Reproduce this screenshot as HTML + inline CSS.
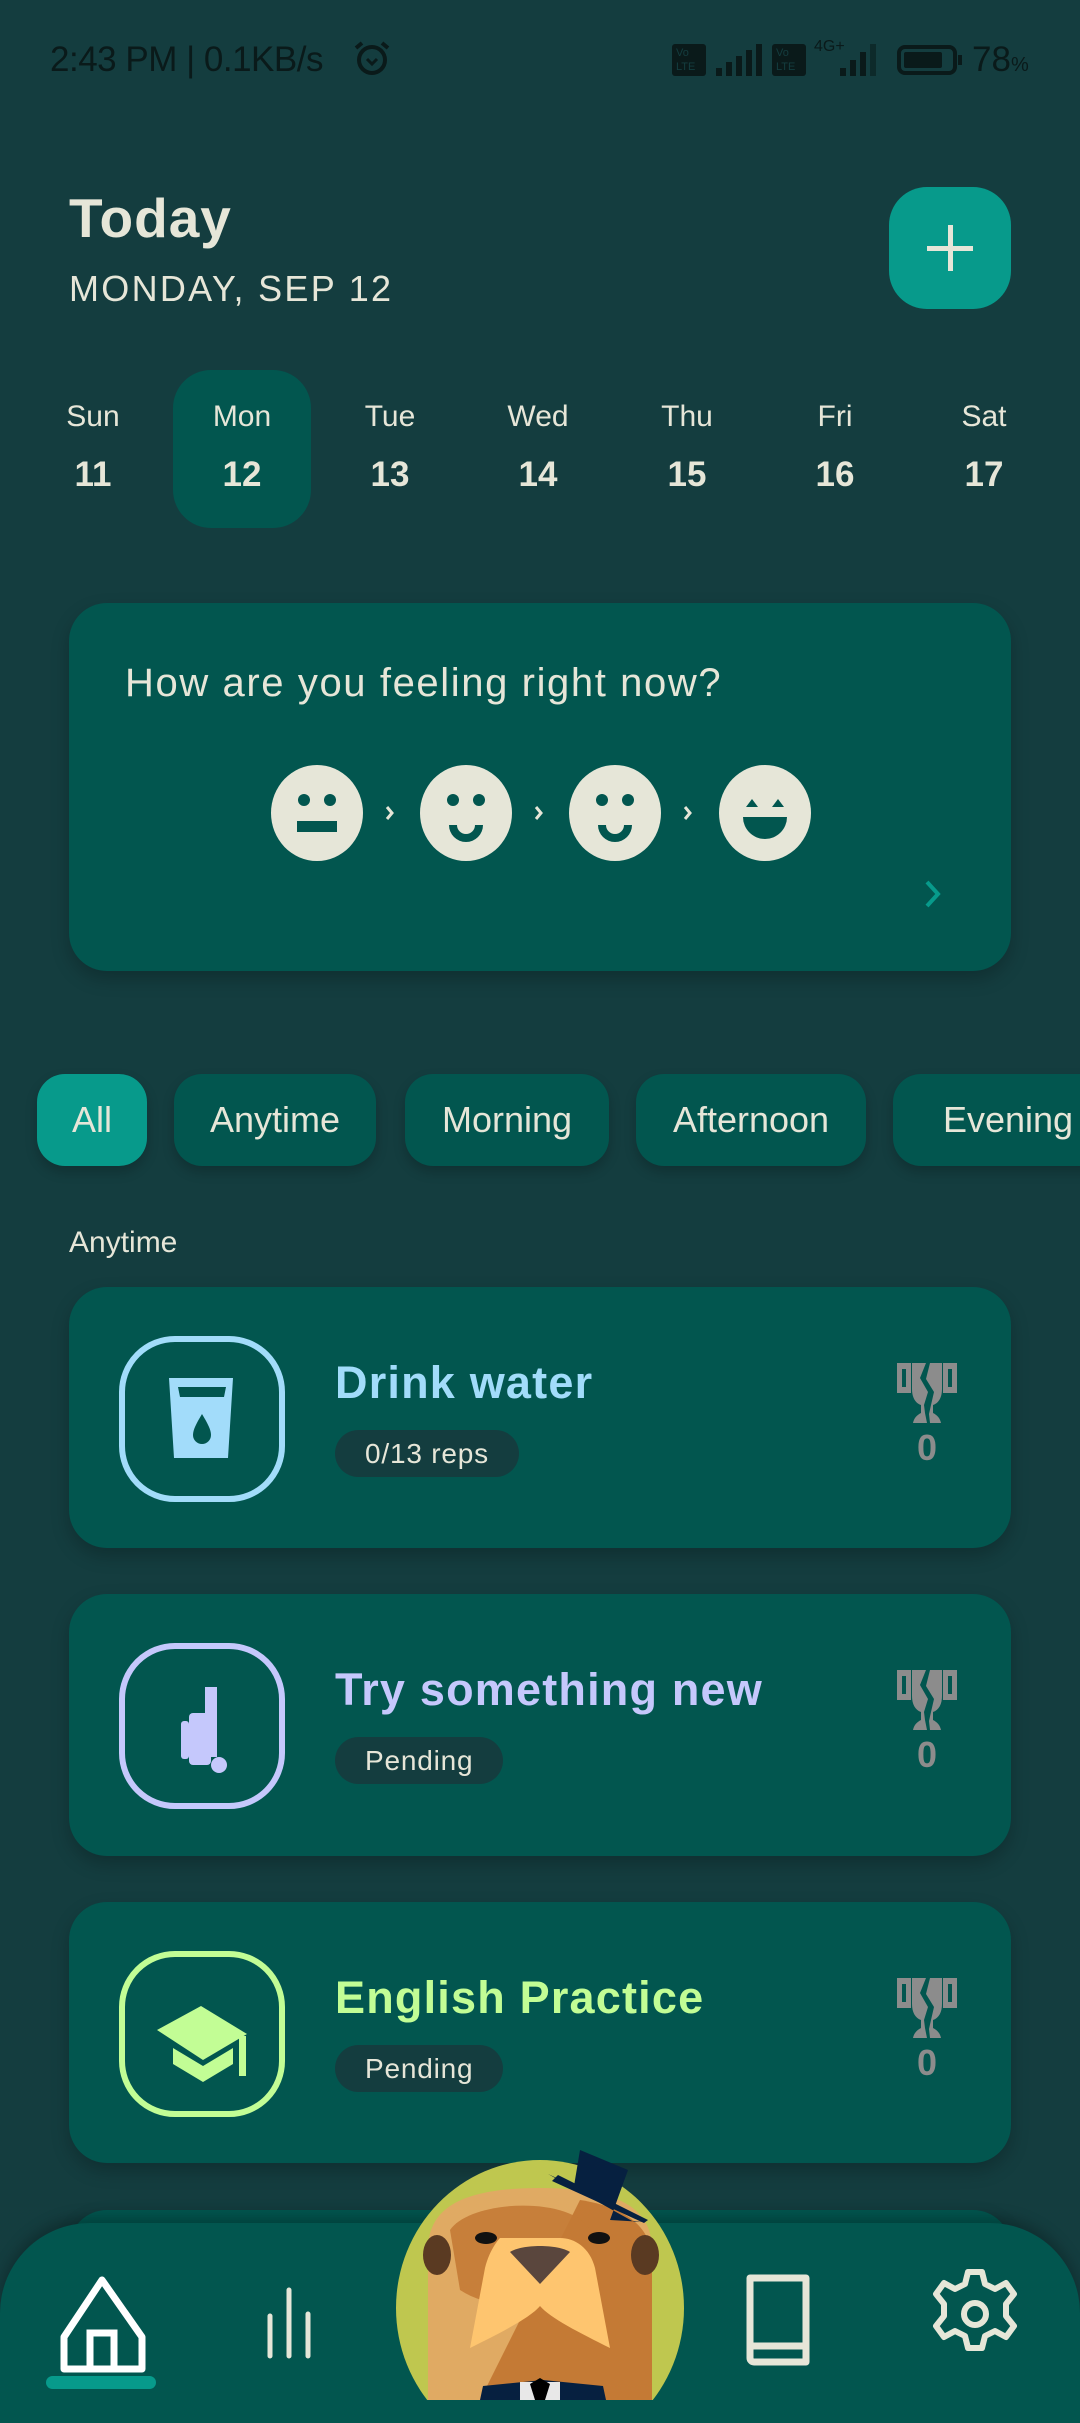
<!DOCTYPE html>
<html><head><meta charset="utf-8">
<style>
*{margin:0;padding:0;box-sizing:border-box}
html,body{width:1080px;height:2400px;overflow:hidden;background:#143d3f;font-family:"Liberation Sans",sans-serif}
.a{position:absolute}
.cream{color:#e6e6d8}
.card{position:absolute;left:69px;width:942px;background:#02564f;border-radius:38px;box-shadow:0 8px 18px rgba(0,0,0,.22)}
.chip{position:absolute;top:1074px;height:92px;border-radius:28px;background:#02564f;color:#e6e6d8;font-size:36px;line-height:92px;text-align:center;box-shadow:0 6px 12px rgba(0,0,0,.2)}
.day{position:absolute;width:120px;text-align:center;color:#e6e6d8}
.dn{top:400px;font-size:30px}
.dd{top:455px;font-size:35px;font-weight:bold}
.ibox{position:absolute;left:50px;top:49px;width:166px;height:166px;border:6px solid;border-radius:56px}
.title{position:absolute;left:266px;top:70px;font-size:45px;font-weight:bold;letter-spacing:1.2px}
.pill{position:absolute;left:266px;top:143px;height:47px;border-radius:24px;background:#143d3f;color:#e6e6d8;font-size:28px;line-height:47px;padding:0 30px;letter-spacing:0.8px}
.zero{position:absolute;left:825px;top:140px;width:66px;text-align:center;color:#8c8c8c;font-size:36px;font-weight:bold}
</style></head><body>

<!-- status bar -->
<div class="a" style="left:50px;top:40px;font-size:35px;color:#0a1a1a;letter-spacing:-0.5px">2:43 PM | 0.1KB/s</div>
<svg class="a" style="left:352px;top:40px" width="42" height="36" viewBox="0 0 42 36"><circle cx="20" cy="20" r="13" fill="none" stroke="#0a1a1a" stroke-width="4"/><path d="M4 8l6-5M36 8l-6-5" stroke="#0a1a1a" stroke-width="4"/><path d="M15 19l5 5 5-5" stroke="#0a1a1a" stroke-width="3" fill="none"/></svg>
<div class="a" style="left:672px;top:44px;width:34px;height:32px;background:#0a1a1a;border-radius:3px;color:#143d3f;font-size:11px;line-height:14px;padding:2px 4px">Vo<br>LTE</div>
<svg class="a" style="left:714px;top:44px" width="50" height="32"><rect x="2" y="24" width="6" height="8" fill="#0a1a1a"/><rect x="12" y="18" width="6" height="14" fill="#0a1a1a"/><rect x="22" y="12" width="6" height="20" fill="#0a1a1a"/><rect x="32" y="6" width="6" height="26" fill="#0a1a1a"/><rect x="42" y="0" width="6" height="32" fill="#0a1a1a"/></svg>
<div class="a" style="left:772px;top:44px;width:34px;height:32px;background:#0a1a1a;border-radius:3px;color:#143d3f;font-size:11px;line-height:14px;padding:2px 4px">Vo<br>LTE</div>
<div class="a" style="left:814px;top:38px;font-size:16px;color:#0a1a1a">4G+</div>
<svg class="a" style="left:828px;top:44px" width="56" height="32"><rect x="12" y="24" width="6" height="8" fill="#0a1a1a"/><rect x="22" y="16" width="6" height="16" fill="#0a1a1a"/><rect x="32" y="8" width="6" height="24" fill="#0a1a1a"/><rect x="42" y="0" width="6" height="32" fill="#0d2a2a"/></svg>
<div class="a" style="left:897px;top:45px;width:60px;height:30px;border:4px solid #0a1a1a;border-radius:8px"><div style="margin:3px;width:38px;height:16px;background:#0a1a1a;border-radius:2px"></div></div>
<div class="a" style="left:958px;top:55px;width:4px;height:10px;background:#0a1a1a"></div>
<div class="a" style="left:972px;top:40px;font-size:35px;color:#0a1a1a">78<span style="font-size:20px">%</span></div>

<!-- header -->
<div class="a cream" style="left:69px;top:186px;font-size:55px;font-weight:bold;letter-spacing:1px">Today</div>
<div class="a cream" style="left:69px;top:268px;font-size:36px;letter-spacing:2.3px">MONDAY, SEP 12</div>
<div class="a" style="left:889px;top:187px;width:122px;height:122px;border-radius:38px;background:#079a8b"></div>
<div class="a" style="left:927px;top:246px;width:46px;height:5px;background:#e6e6d8"></div>
<div class="a" style="left:948px;top:225px;width:5px;height:46px;background:#e6e6d8"></div>

<!-- days -->
<div class="a" style="left:173px;top:370px;width:138px;height:158px;border-radius:38px;background:#02564f"></div>
<div class="day dn" style="left:33px">Sun</div><div class="day dd" style="left:33px">11</div>
<div class="day dn" style="left:182px">Mon</div><div class="day dd" style="left:182px">12</div>
<div class="day dn" style="left:330px">Tue</div><div class="day dd" style="left:330px">13</div>
<div class="day dn" style="left:478px">Wed</div><div class="day dd" style="left:478px">14</div>
<div class="day dn" style="left:627px">Thu</div><div class="day dd" style="left:627px">15</div>
<div class="day dn" style="left:775px">Fri</div><div class="day dd" style="left:775px">16</div>
<div class="day dn" style="left:924px">Sat</div><div class="day dd" style="left:924px">17</div>

<!-- mood card -->
<div class="card" style="top:603px;height:368px">
  <div class="a cream" style="left:56px;top:58px;font-size:40px;letter-spacing:1.6px">How are you feeling right now?</div>
  <svg class="a" style="left:200px;top:160px" width="560" height="100" viewBox="0 0 560 100">
    <g fill="#e6e6d8">
      <ellipse cx="48" cy="50" rx="46" ry="48"/><ellipse cx="197" cy="50" rx="46" ry="48"/><ellipse cx="346" cy="50" rx="46" ry="48"/><ellipse cx="496" cy="50" rx="46" ry="48"/>
    </g>
    <g fill="#02564f">
      <circle cx="35" cy="37" r="6"/><circle cx="61" cy="37" r="6"/><rect x="28" y="58" width="40" height="11"/>
      <circle cx="184" cy="37" r="6"/><circle cx="210" cy="37" r="6"/><path d="M180 62a17 17 0 0 0 34 0l-8 0a9 9 0 0 1-18 0z"/>
      <circle cx="333" cy="37" r="6"/><circle cx="359" cy="37" r="6"/><path d="M329 62a17 17 0 0 0 34 0l-8 0a9 9 0 0 1-18 0z"/>
      <path d="M477 44l6-8 6 8zM503 44l6-8 6 8z"/><path d="M474 54h44a22 22 0 0 1-44 0z"/>
    </g>
    <g stroke="#e6e6d8" stroke-width="3" fill="none"><path d="M118 44l5 6-5 6M267 44l5 6-5 6M416 44l5 6-5 6"/></g>
  </svg>
  <svg class="a" style="left:854px;top:276px" width="20" height="30"><path d="M4 3l11 12-11 12" stroke="#079a8b" stroke-width="4" fill="none"/></svg>
</div>

<!-- chips -->
<div class="chip" style="left:37px;width:110px;background:#079a8b">All</div>
<div class="chip" style="left:174px;width:202px">Anytime</div>
<div class="chip" style="left:405px;width:204px">Morning</div>
<div class="chip" style="left:636px;width:230px">Afternoon</div>
<div class="chip" style="left:893px;width:230px">Evening</div>

<div class="a cream" style="left:69px;top:1226px;font-size:30px">Anytime</div>

<!-- trophy symbol -->
<svg width="0" height="0" style="position:absolute">
  <defs>
    <g id="tr" fill="#8c8c8c" fill-rule="evenodd">
      <path d="M0 0h14v30H0zM5 6v18h4V6z"/>
      <path d="M46 0h14v30H46zM51 6v18h4V6z"/>
      <path d="M15 0h14l-6 15 8 14-4 13 1 8 2 10H16c1-5 4-8 8-10v-8C18 40 15 34 15 26z"/>
      <path d="M33 0h12v26c0 8-3 14-9 16v8c4 2 7 5 8 10H33l-1-9 2-9 3-13-8-13z"/>
    </g>
  </defs>
</svg>

<!-- card 1 -->
<div class="card" style="top:1287px;height:261px">
  <div class="ibox" style="border-color:#a2dcfa">
    <svg class="a" style="left:40px;top:32px" width="74" height="90" viewBox="0 0 74 90"><path d="M4 4h64l-5 80H9z" fill="#a2dcfa"/><path d="M13 13h48l-2 10H15z" fill="#02564f"/><path d="M37 40c-6 10-9 16-9 21a9 9 0 0 0 18 0c0-5-3-11-9-21z" fill="#02564f"/></svg>
  </div>
  <div class="title" style="color:#a2dcfa">Drink water</div>
  <div class="pill">0/13 reps</div>
  <svg class="a" style="left:828px;top:76px" width="60" height="60" viewBox="0 0 60 60"><use href="#tr"/></svg>
  <div class="zero">0</div>
</div>

<!-- card 2 -->
<div class="card" style="top:1594px;height:262px">
  <div class="ibox" style="border-color:#c5c8fc">
    <svg class="a" style="left:50px;top:38px" width="60" height="90" viewBox="0 0 60 90"><g fill="#c5c8fc"><path d="M30 0h12v70H30V36h-8V26h8z"/><rect x="14" y="26" width="22" height="52" rx="4"/><rect x="6" y="34" width="8" height="38" rx="3"/><circle cx="44" cy="78" r="8"/></g></svg>
  </div>
  <div class="title" style="color:#c5c8fc">Try something new</div>
  <div class="pill">Pending</div>
  <svg class="a" style="left:828px;top:76px" width="60" height="60" viewBox="0 0 60 60"><use href="#tr"/></svg>
  <div class="zero">0</div>
</div>

<!-- card 3 -->
<div class="card" style="top:1902px;height:261px">
  <div class="ibox" style="border-color:#c2fd95">
    <svg class="a" style="left:32px;top:45px" width="92" height="84" viewBox="0 0 92 84"><g fill="#c2fd95"><path d="M0 28L44 4l46 28-44 26z"/><path d="M16 46v16l30 18 30-18V46l-30 18z"/><path d="M82 34h7v40h-7z"/></g></svg>
  </div>
  <div class="title" style="color:#c2fd95">English Practice</div>
  <div class="pill">Pending</div>
  <svg class="a" style="left:828px;top:76px" width="60" height="60" viewBox="0 0 60 60"><use href="#tr"/></svg>
  <div class="zero">0</div>
</div>

<!-- card 4 peek -->
<div class="card" style="top:2210px;height:200px"></div>

<!-- bottom nav -->
<div class="a" style="left:0;top:2223px;width:1080px;height:200px;background:#02564f;border-radius:90px 90px 0 0;box-shadow:0 -6px 14px rgba(0,0,0,.25)"></div>
<svg class="a" style="left:58px;top:2275px" width="90" height="100" viewBox="0 0 90 100"><path d="M44 5L6 62v32h78V62z" fill="none" stroke="#fff" stroke-width="7" stroke-linejoin="round"/><path d="M32 94V58h24v36" fill="none" stroke="#fff" stroke-width="7"/></svg>
<div class="a" style="left:46px;top:2376px;width:110px;height:13px;border-radius:7px;background:#079a8b"></div>
<svg class="a" style="left:260px;top:2280px" width="60" height="80"><g stroke="#e6e6d8" stroke-width="5" stroke-linecap="round"><path d="M10 36v40M29 10v66M48 34v42"/></g></svg>
<svg class="a" style="left:744px;top:2270px" width="70" height="100" viewBox="0 0 70 100"><path d="M6 80V8h56v84H10a4 4 0 0 1-4-4z" fill="none" stroke="#e6e6d8" stroke-width="7" stroke-linejoin="round"/><path d="M6 76h56" stroke="#e6e6d8" stroke-width="7"/></svg>
<svg class="a" style="left:930px;top:2264px" width="90" height="100" viewBox="-45 -50 90 100"><path d="M-7-42h14l3 12 10 5 11-6 8 11-8 10v12l8 10-8 11-11-6-10 5-3 12h-14l-3-12-10-5-11 6-8-11 8-10v-12l-8-10 8-11 11 6 10-5z" fill="none" stroke="#e6e6d8" stroke-width="6" stroke-linejoin="round"/><circle r="11" fill="none" stroke="#e6e6d8" stroke-width="6"/></svg>

<!-- mascot -->
<svg class="a" style="left:380px;top:2140px" width="320" height="260" viewBox="0 0 320 260">
  <ellipse cx="160" cy="168" rx="144" ry="148" fill="#bfc74f"/>
  <path d="M48 260V110c0-40 30-62 112-62s112 22 112 62v150z" fill="#e0aa63"/>
  <path d="M200 60c40 6 72 24 72 60v140H100z" fill="#c47a35"/>
  <path d="M70 90c20-30 120-35 140 0l-20 60c-30 20-80 20-110 0z" fill="#c47a35" opacity=".9"/>
  <ellipse cx="57" cy="115" rx="14" ry="20" fill="#5a3a22"/>
  <ellipse cx="265" cy="115" rx="14" ry="20" fill="#5a3a22"/>
  <path d="M120 98h60c15 0 30 10 35 30l15 80c-30-15-60-30-70-42-10 12-40 27-70 42l15-80c5-20 15-30 15-30z" fill="#fec56f"/>
  <path d="M130 112c12-8 48-8 60 0l-30 32z" fill="#5a463d"/>
  <ellipse cx="106" cy="98" rx="11" ry="6" fill="#111"/>
  <ellipse cx="219" cy="98" rx="11" ry="6" fill="#111"/>
  <path d="M200 10l48 20-18 50 34 2-10 0-86-48 26 12z" fill="#062040"/>
  <path d="M178 35l90 45-4 3-92-42z" fill="#062040"/>
  <path d="M100 260l3-14 60-6 60 6 3 14z" fill="#062040"/>
  <path d="M140 260v-18h40v18z" fill="#e8e8e8"/>
  <path d="M150 244l10-6 10 6-5 16h-10z" fill="#000"/>
</svg>

</body></html>
